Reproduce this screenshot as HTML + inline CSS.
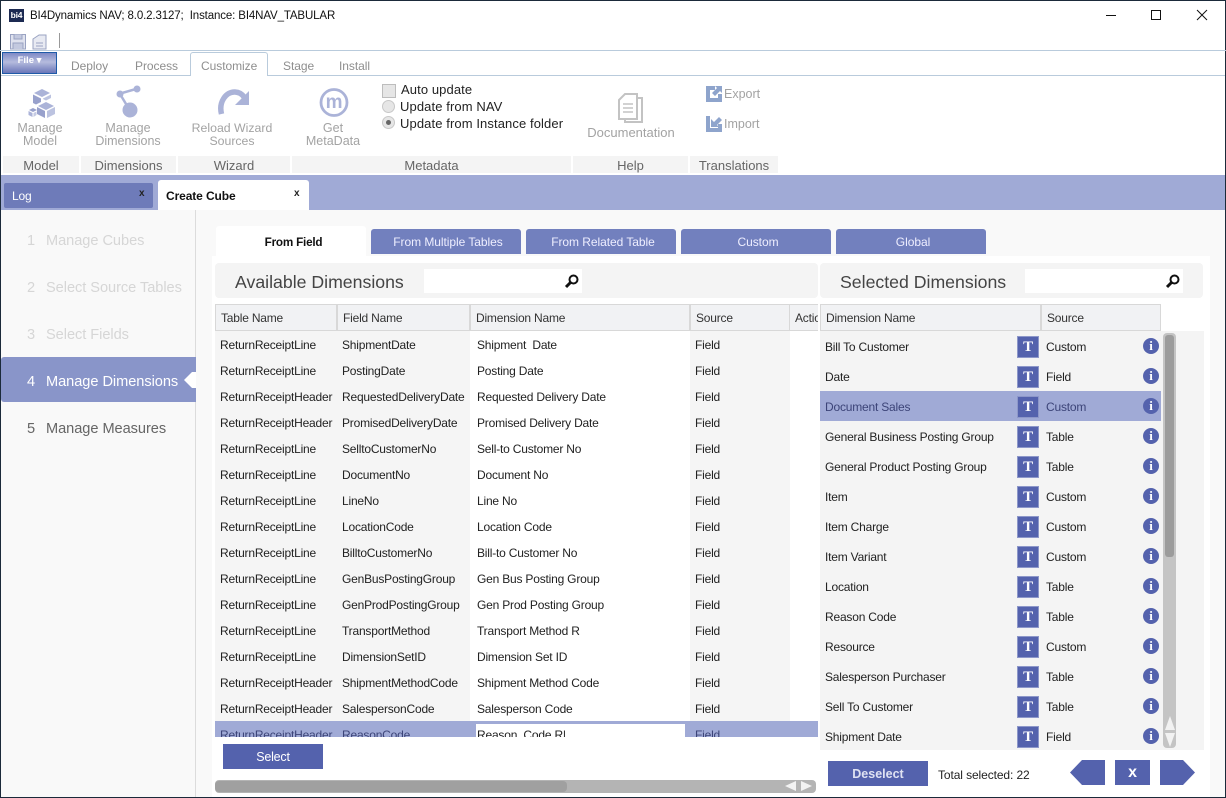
<!DOCTYPE html>
<html><head><meta charset="utf-8"><style>
html,body{margin:0;padding:0;width:1226px;height:798px;overflow:hidden;background:#fff}
body{font-family:"Liberation Sans",sans-serif;font-size:12px;letter-spacing:-.2px;color:#222;position:relative}
div,span,svg{position:absolute}
.n{white-space:nowrap;line-height:16px}
.rb{font-size:13px;letter-spacing:.1px;color:#222}
.top{font-size:12px;letter-spacing:-.05px;color:#8e8e8e}
.g{color:#a3a3a3;font-size:12.5px;letter-spacing:0;line-height:12.5px;text-align:center;white-space:nowrap}
.gl{background:#f4f4f4;top:156px;height:17px;text-align:center;color:#666;font-size:13px;letter-spacing:0;line-height:19px}
.tab{top:229px;height:25px;width:150px;padding-left:4px;box-sizing:border-box;background:#7280be;color:#eef;border-radius:3px 3px 0 0;text-align:center;line-height:27px;font-size:12px;letter-spacing:-.05px}
.st{left:27px;font-size:14.6px;letter-spacing:-.05px;line-height:20px;color:#d6d6d6;white-space:nowrap}
.st b{font-weight:normal;position:absolute;left:19px}
.h{top:304px;height:25px;background:#f1f2f4;border:1px solid #d8d8d8;line-height:26px;padding-left:5px;box-sizing:content-box;color:#333;white-space:nowrap;overflow:hidden}
.r{left:0;width:603px;height:26px;line-height:26px}
.r span{white-space:nowrap;top:1px}
.a{left:5px}.b{left:127px}.d{left:262px}.e{left:480px}
.q{left:0;width:341px;height:30px;line-height:30px}
.q span{white-space:nowrap;top:1px}
.q .x{left:5px}.q .y{left:226px}
.q i{position:absolute;left:197px;top:5px;width:20px;height:20px;background:#5462ad;border:1px solid #8d97c9;color:#fff;font:bold 15px/20px "Liberation Serif",serif;text-align:center}
.q u{position:absolute;left:323px;top:7px;width:16px;height:16px;border-radius:50%;background:#5462ad;color:#fff;font:bold 13px/16px "Liberation Serif",serif;text-align:center;text-decoration:none}
</style></head><body>
<div style="left:0;top:0;width:1226px;height:1px;background:#1b2a3a"></div>
<div style="left:0;top:0;width:1px;height:798px;background:#1b2a3a"></div>
<div style="left:1225px;top:0;width:1px;height:798px;background:#1b2a3a"></div>
<div style="left:0;top:797px;width:1226px;height:1px;background:#1b2a3a"></div>

<div style="left:9px;top:9px;width:15px;height:13px;background:#1c2a52;color:#fff;font:bold 8.500px/13px 'Liberation Sans',sans-serif;text-align:center">bi4</div>
<div class="n" style="left:30px;top:8px;font-size:11.500px;letter-spacing:-.13px;color:#111">BI4Dynamics NAV; 8.0.2.3127;&nbsp; Instance: BI4NAV_TABULAR</div>
<svg style="left:1105px;top:8px" width="115" height="16" viewBox="0 0 115 16" fill="none" stroke="#111"><path d="M1 7.500H11"/><rect x="46.500" y="2.500" width="9" height="9"/><path d="M92 2L102 12M102 2L92 12"/></svg>

<svg style="left:9px;top:33px" width="40" height="17" viewBox="0 0 40 17" fill="#c3c9df" stroke="#9aa3c2"><path d="M1.500 1.500H16.500V16H1.500Z" fill="#dfe2ee"/><path d="M5 1.500V6H13V1.500M4 16V10H14V16"/><path d="M24 6L30 2H37V16H24Z" fill="#e8eaf2"/><path d="M27 10H34M27 13H34"/></svg>
<div style="left:59px;top:33px;width:1px;height:15px;background:#999"></div>
<div style="left:0;top:50px;width:1226px;height:1px;background:#b9cbdc"></div>

<div style="left:2px;top:52px;width:53px;height:20px;background:linear-gradient(#7f8ac6,#b5bbdd 45%,#6a76b8);border:1px solid #1f5ba8;color:#fff;font-weight:bold;font-size:9.500px;letter-spacing:0;line-height:16px;text-align:center">File ▾</div>
<div class="n top" style="left:71px;top:58px">Deploy</div>
<div class="n top" style="left:135px;top:58px">Process</div>
<div style="left:190px;top:52px;width:76px;height:23px;background:#fff;border:1px solid #b9cbdc;border-bottom:0;border-radius:3px 3px 0 0"></div>
<div class="n top" style="left:201px;top:58px">Customize</div>
<div class="n top" style="left:283px;top:58px">Stage</div>
<div class="n top" style="left:339px;top:58px">Install</div>
<div style="left:1px;top:75px;width:189px;height:1px;background:#b9cbdc"></div>
<div style="left:268px;top:75px;width:957px;height:1px;background:#b9cbdc"></div>

<svg style="left:27px;top:88px" width="30" height="30" viewBox="0 0 30 30" fill="#abb3d8"><path d="M7 5L15 1L23 5L15 9Z"/><path d="M6 6.500L14 10.500V14L9 16.500L6 15Z" fill="#98a1cc"/><path d="M16 10.500L24 6.500V10L19 12.500L16 11Z" fill="#bcc3e0"/><path d="M11 18L19 14L27 18L19 22Z"/><path d="M10 19L18 23V30L10 26Z" fill="#98a1cc"/><path d="M20 23L28 19V26L20 30Z" fill="#bcc3e0"/><path d="M2 22L6 20L10 22L6 24Z" fill="#98a1cc"/><path d="M1.500 23L5.500 25V29L1.500 27Z"/><path d="M6.500 25L9.500 23.500V27L6.500 29Z" fill="#c4cae3"/></svg>
<svg style="left:114px;top:85px" width="30" height="34" viewBox="0 0 30 34" fill="#abb3d8"><path d="M8 8L22 4M6 9L15 24" stroke="#abb3d8" stroke-width="2.500" fill="none"/><circle cx="6" cy="9" r="3.500"/><circle cx="23" cy="4" r="3.500"/><circle cx="16" cy="25" r="7.500"/></svg>
<svg style="left:217px;top:87px" width="34" height="30" viewBox="0 0 34 30" fill="none"><path d="M4.500 27C1.500 15 9 4.500 18 5C22 5.200 25 7 27 10" stroke="#abb3d8" stroke-width="5.500"/><path d="M32 4V18H18Z" fill="#abb3d8"/></svg>
<svg style="left:319px;top:87px" width="30" height="31" viewBox="0 0 30 31"><circle cx="15" cy="15.500" r="13" fill="none" stroke="#abb3d8" stroke-width="2.800"/><text x="15" y="21" text-anchor="middle" font-family="Liberation Sans" font-size="19" font-weight="bold" fill="#abb3d8">m</text></svg>

<div class="g" style="left:10px;top:122px;width:60px">Manage<br>Model</div>
<div class="g" style="left:90px;top:122px;width:76px">Manage<br>Dimensions</div>
<div class="g" style="left:182px;top:122px;width:100px;font-size:12.300px">Reload Wizard<br>Sources</div>
<div class="g" style="left:300px;top:122px;width:66px">Get<br>MetaData</div>

<div style="left:382px;top:84px;width:12px;height:12px;background:#e6e6e6;border:1px solid #bdbdbd"></div>
<div class="n rb" style="left:401px;top:82px">Auto update</div>
<div style="left:382px;top:100px;width:11px;height:11px;border-radius:50%;background:#e6e6e6;border:1px solid #c8c8c8"></div>
<div class="n rb" style="left:400px;top:99px">Update from NAV</div>
<div style="left:382px;top:116px;width:11px;height:11px;border-radius:50%;background:#e6e6e6;border:1px solid #c8c8c8"></div>
<div style="left:386px;top:120px;width:5px;height:5px;border-radius:50%;background:#666"></div>
<div class="n rb" style="left:400px;top:116px">Update from Instance folder</div>

<svg style="left:617px;top:91px" width="28" height="33" viewBox="0 0 28 33" fill="none" stroke="#c3c3c3" stroke-width="2"><path d="M2 9L8 3H20V28H2Z"/><path d="M20 7H25V31H8V28"/><path d="M6 13H16M6 17H16M6 21H16" stroke-width="1.500"/></svg>
<div class="g" style="left:580px;top:126px;width:102px;font-size:13px;line-height:13px">Documentation</div>

<svg style="left:706px;top:85px" width="17" height="17" viewBox="0 0 17 17" fill="#8ea4cc"><path d="M0 1H9V5H4V13H12V9H16V17H0Z"/><path d="M9 1H16V8L14 6L9 11L6 8L11 3Z"/></svg>
<div class="n" style="left:724px;top:86px;color:#a3a3a3;font-size:12.500px;letter-spacing:0">Export</div>
<svg style="left:706px;top:115px" width="17" height="17" viewBox="0 0 17 17" fill="#8ea4cc"><path d="M0 1H4V13H12V9H16V17H0Z"/><path d="M5 4V12H13L11 10L16 5L13 2L8 7L5 4Z"/></svg>
<div class="n" style="left:724px;top:116px;color:#a3a3a3;font-size:12.500px;letter-spacing:0">Import</div>

<div class="gl" style="left:3px;width:76px">Model</div>
<div class="gl" style="left:81px;width:95px">Dimensions</div>
<div class="gl" style="left:178px;width:112px">Wizard</div>
<div class="gl" style="left:292px;width:279px">Metadata</div>
<div class="gl" style="left:573px;width:115px">Help</div>
<div class="gl" style="left:690px;width:88px">Translations</div>

<div style="left:1px;top:175px;width:1224px;height:35px;background:#a0aad6"></div>
<div style="left:4px;top:183px;width:149px;height:25px;background:#6e7bb9;border-radius:2px"></div>
<div class="n" style="left:12px;top:188px;color:#fff">Log</div>
<div class="n" style="left:139px;top:186px;font-size:10px;font-weight:bold;color:#222">x</div>
<div style="left:158px;top:180px;width:151px;height:30px;background:#fff;border-radius:3px 3px 0 0"></div>
<div class="n" style="left:166px;top:188px;font-weight:bold;color:#111;font-size:12px;letter-spacing:-.1px">Create Cube</div>
<div class="n" style="left:294px;top:186px;font-size:10px;font-weight:bold;color:#222">x</div>

<div style="left:1px;top:210px;width:1224px;height:587px;background:#f9f9f9"></div>
<div style="left:195px;top:210px;width:1px;height:587px;background:#dcdcdc"></div>

<div class="st" style="top:231px">1<b>Manage Cubes</b></div>
<div class="st" style="top:278px">2<b>Select Source Tables</b></div>
<div class="st" style="top:325px">3<b>Select Fields</b></div>
<div style="left:1px;top:357px;width:195px;height:45px;background:#8995c9;border-radius:3px 0 0 3px"></div>
<svg style="left:184px;top:372px" width="12" height="16"><path d="M12 0V16H8L0 8L8 0Z" fill="#fff"/></svg>
<div class="st" style="top:372px;color:#fff">4<b>Manage Dimensions</b></div>
<div class="st" style="top:419px;color:#666">5<b>Manage Measures</b></div>

<div style="left:212px;top:256px;width:998px;height:541px;background:#fff"></div>
<div style="left:216px;top:226px;width:150px;height:30px;padding-left:5px;box-sizing:border-box;background:#fff;border-radius:3px 3px 0 0;font-weight:bold;text-align:center;line-height:33px;color:#111;font-size:11.700px">From Field</div>
<div class="tab" style="left:371px">From Multiple Tables</div>
<div class="tab" style="left:526px">From Related Table</div>
<div class="tab" style="left:681px">Custom</div>
<div class="tab" style="left:836px">Global</div>

<div style="left:215px;top:263px;width:603px;height:35px;background:#f4f4f4;border-radius:4px"></div>
<div class="n" style="left:235px;top:272px;font-size:17.700px;letter-spacing:0;line-height:20px;color:#444">Available Dimensions</div>
<div style="left:424px;top:269px;width:158px;height:24px;background:#fff"></div>
<svg style="left:564px;top:273px" width="16" height="16" viewBox="0 0 16 16" fill="none" stroke="#111"><circle cx="9.500" cy="6.500" r="4" stroke-width="2"/><path d="M6.500 9.500L2 14" stroke-width="3"/></svg>
<div style="left:820px;top:263px;width:383px;height:35px;background:#f4f4f4;border-radius:4px"></div>
<div class="n" style="left:840px;top:272px;font-size:17.700px;letter-spacing:0;line-height:20px;color:#444">Selected Dimensions</div>
<div style="left:1025px;top:269px;width:158px;height:24px;background:#fff"></div>
<svg style="left:1165px;top:273px" width="16" height="16" viewBox="0 0 16 16" fill="none" stroke="#111"><circle cx="9.500" cy="6.500" r="4" stroke-width="2"/><path d="M6.500 9.500L2 14" stroke-width="3"/></svg>

<div class="h" style="left:215px;width:115px">Table Name</div>
<div class="h" style="left:337px;width:126px">Field Name</div>
<div class="h" style="left:470px;width:213px">Dimension Name</div>
<div class="h" style="left:690px;width:93px">Source</div>
<div class="h" style="left:789px;width:23px;border-right:0">Action</div>

<div style="left:215px;top:331px;width:603px;height:406px;overflow:hidden;background:#fff">
<div style="left:0;top:0;width:255px;height:406px;background:#f5f5f5"></div>
<div style="left:475px;top:0;width:100px;height:406px;background:#f5f5f5"></div>
<div class="r" style="top:0"><span class="a">ReturnReceiptLine</span><span class="b">ShipmentDate</span><span class="d">Shipment&nbsp; Date</span><span class="e">Field</span></div>
<div class="r" style="top:26px"><span class="a">ReturnReceiptLine</span><span class="b">PostingDate</span><span class="d">Posting Date</span><span class="e">Field</span></div>
<div class="r" style="top:52px"><span class="a">ReturnReceiptHeader</span><span class="b">RequestedDeliveryDate</span><span class="d">Requested Delivery Date</span><span class="e">Field</span></div>
<div class="r" style="top:78px"><span class="a">ReturnReceiptHeader</span><span class="b">PromisedDeliveryDate</span><span class="d">Promised Delivery Date</span><span class="e">Field</span></div>
<div class="r" style="top:104px"><span class="a">ReturnReceiptLine</span><span class="b">SelltoCustomerNo</span><span class="d">Sell-to Customer No</span><span class="e">Field</span></div>
<div class="r" style="top:130px"><span class="a">ReturnReceiptLine</span><span class="b">DocumentNo</span><span class="d">Document No</span><span class="e">Field</span></div>
<div class="r" style="top:156px"><span class="a">ReturnReceiptLine</span><span class="b">LineNo</span><span class="d">Line No</span><span class="e">Field</span></div>
<div class="r" style="top:182px"><span class="a">ReturnReceiptLine</span><span class="b">LocationCode</span><span class="d">Location Code</span><span class="e">Field</span></div>
<div class="r" style="top:208px"><span class="a">ReturnReceiptLine</span><span class="b">BilltoCustomerNo</span><span class="d">Bill-to Customer No</span><span class="e">Field</span></div>
<div class="r" style="top:234px"><span class="a">ReturnReceiptLine</span><span class="b">GenBusPostingGroup</span><span class="d">Gen Bus Posting Group</span><span class="e">Field</span></div>
<div class="r" style="top:260px"><span class="a">ReturnReceiptLine</span><span class="b">GenProdPostingGroup</span><span class="d">Gen Prod Posting Group</span><span class="e">Field</span></div>
<div class="r" style="top:286px"><span class="a">ReturnReceiptLine</span><span class="b">TransportMethod</span><span class="d">Transport Method R</span><span class="e">Field</span></div>
<div class="r" style="top:312px"><span class="a">ReturnReceiptLine</span><span class="b">DimensionSetID</span><span class="d">Dimension Set ID</span><span class="e">Field</span></div>
<div class="r" style="top:338px"><span class="a">ReturnReceiptHeader</span><span class="b">ShipmentMethodCode</span><span class="d">Shipment Method Code</span><span class="e">Field</span></div>
<div class="r" style="top:364px"><span class="a">ReturnReceiptHeader</span><span class="b">SalespersonCode</span><span class="d">Salesperson Code</span><span class="e">Field</span></div>
<div class="r" style="top:390px;background:#a0aad6"><span class="a" style="color:#3c4478">ReturnReceiptHeader</span><span class="b" style="color:#3c4478">ReasonCode</span><span style="left:261px;top:3px;width:209px;height:23px;background:#fff"></span><span class="d" style="color:#222">Reason&nbsp; Code R|</span><span class="e" style="color:#3c4478">Field</span></div>
</div>

<div style="left:223px;top:744px;width:100px;height:25px;background:#5462ad;color:#fff;text-align:center;line-height:27px;font-size:12.500px">Select</div>
<div style="left:215px;top:780px;width:601px;height:13px;background:#b4b4b4;border-radius:4px"></div>
<div style="left:215px;top:781px;width:352px;height:11px;background:#a0a0a0;border-radius:4px"></div>
<svg style="left:785px;top:781px" width="28" height="11"><path d="M11 0V10L0 5Z M16 0V10L27 5Z" fill="#f2f2f2"/></svg>

<div class="h" style="left:820px;width:214px">Dimension Name</div>
<div class="h" style="left:1041px;width:113px">Source</div>
<div style="left:820px;top:331px;width:384px;height:419px;background:#f4f4f4;overflow:hidden">
<div class="q" style="top:0"><span class="x">Bill To Customer</span><i>T</i><span class="y">Custom</span><u>i</u></div>
<div class="q" style="top:30px"><span class="x">Date</span><i>T</i><span class="y">Field</span><u>i</u></div>
<div class="q" style="top:60px;background:#a0aad6"><span class="x" style="color:#3c4478">Document Sales</span><i>T</i><span class="y" style="color:#3c4478">Custom</span><u>i</u></div>
<div class="q" style="top:90px"><span class="x">General Business Posting Group</span><i>T</i><span class="y">Table</span><u>i</u></div>
<div class="q" style="top:120px"><span class="x">General Product Posting Group</span><i>T</i><span class="y">Table</span><u>i</u></div>
<div class="q" style="top:150px"><span class="x">Item</span><i>T</i><span class="y">Custom</span><u>i</u></div>
<div class="q" style="top:180px"><span class="x">Item Charge</span><i>T</i><span class="y">Custom</span><u>i</u></div>
<div class="q" style="top:210px"><span class="x">Item Variant</span><i>T</i><span class="y">Custom</span><u>i</u></div>
<div class="q" style="top:240px"><span class="x">Location</span><i>T</i><span class="y">Table</span><u>i</u></div>
<div class="q" style="top:270px"><span class="x">Reason Code</span><i>T</i><span class="y">Table</span><u>i</u></div>
<div class="q" style="top:300px"><span class="x">Resource</span><i>T</i><span class="y">Custom</span><u>i</u></div>
<div class="q" style="top:330px"><span class="x">Salesperson Purchaser</span><i>T</i><span class="y">Table</span><u>i</u></div>
<div class="q" style="top:360px"><span class="x">Sell To Customer</span><i>T</i><span class="y">Table</span><u>i</u></div>
<div class="q" style="top:390px"><span class="x">Shipment Date</span><i>T</i><span class="y">Field</span><u>i</u></div>
</div>
<div style="left:1163px;top:333px;width:13px;height:415px;background:#c4c4c4;border-radius:4px"></div>
<div style="left:1165px;top:335px;width:9px;height:222px;background:#9c9c9c;border-radius:3px"></div>
<svg style="left:1165px;top:716px" width="10" height="31"><path d="M5 0L10 14H0Z M0 17H10L5 31Z" fill="#f2f2f2"/></svg>

<div style="left:828px;top:761px;width:100px;height:25px;background:#5462ad;color:#dfe2f2;text-align:center;line-height:26px;font-weight:bold;font-size:12.500px;letter-spacing:0">Deselect</div>
<div class="n" style="left:938px;top:767px;color:#222;letter-spacing:-.1px">Total selected: 22</div>
<svg style="left:1070px;top:759px" width="126" height="26"><path d="M35 1V26H12L0 13.500L12 1Z" fill="#5462ad"/><path d="M45 1H80V26H45Z" fill="#5462ad"/><path d="M90 1H113L125 13.500L113 26H90Z" fill="#5462ad"/></svg>
<div style="left:1115px;top:760px;width:35px;height:25px;color:#fff;font-weight:bold;font-size:16px;line-height:26px;text-align:center">x</div>
</body></html>
